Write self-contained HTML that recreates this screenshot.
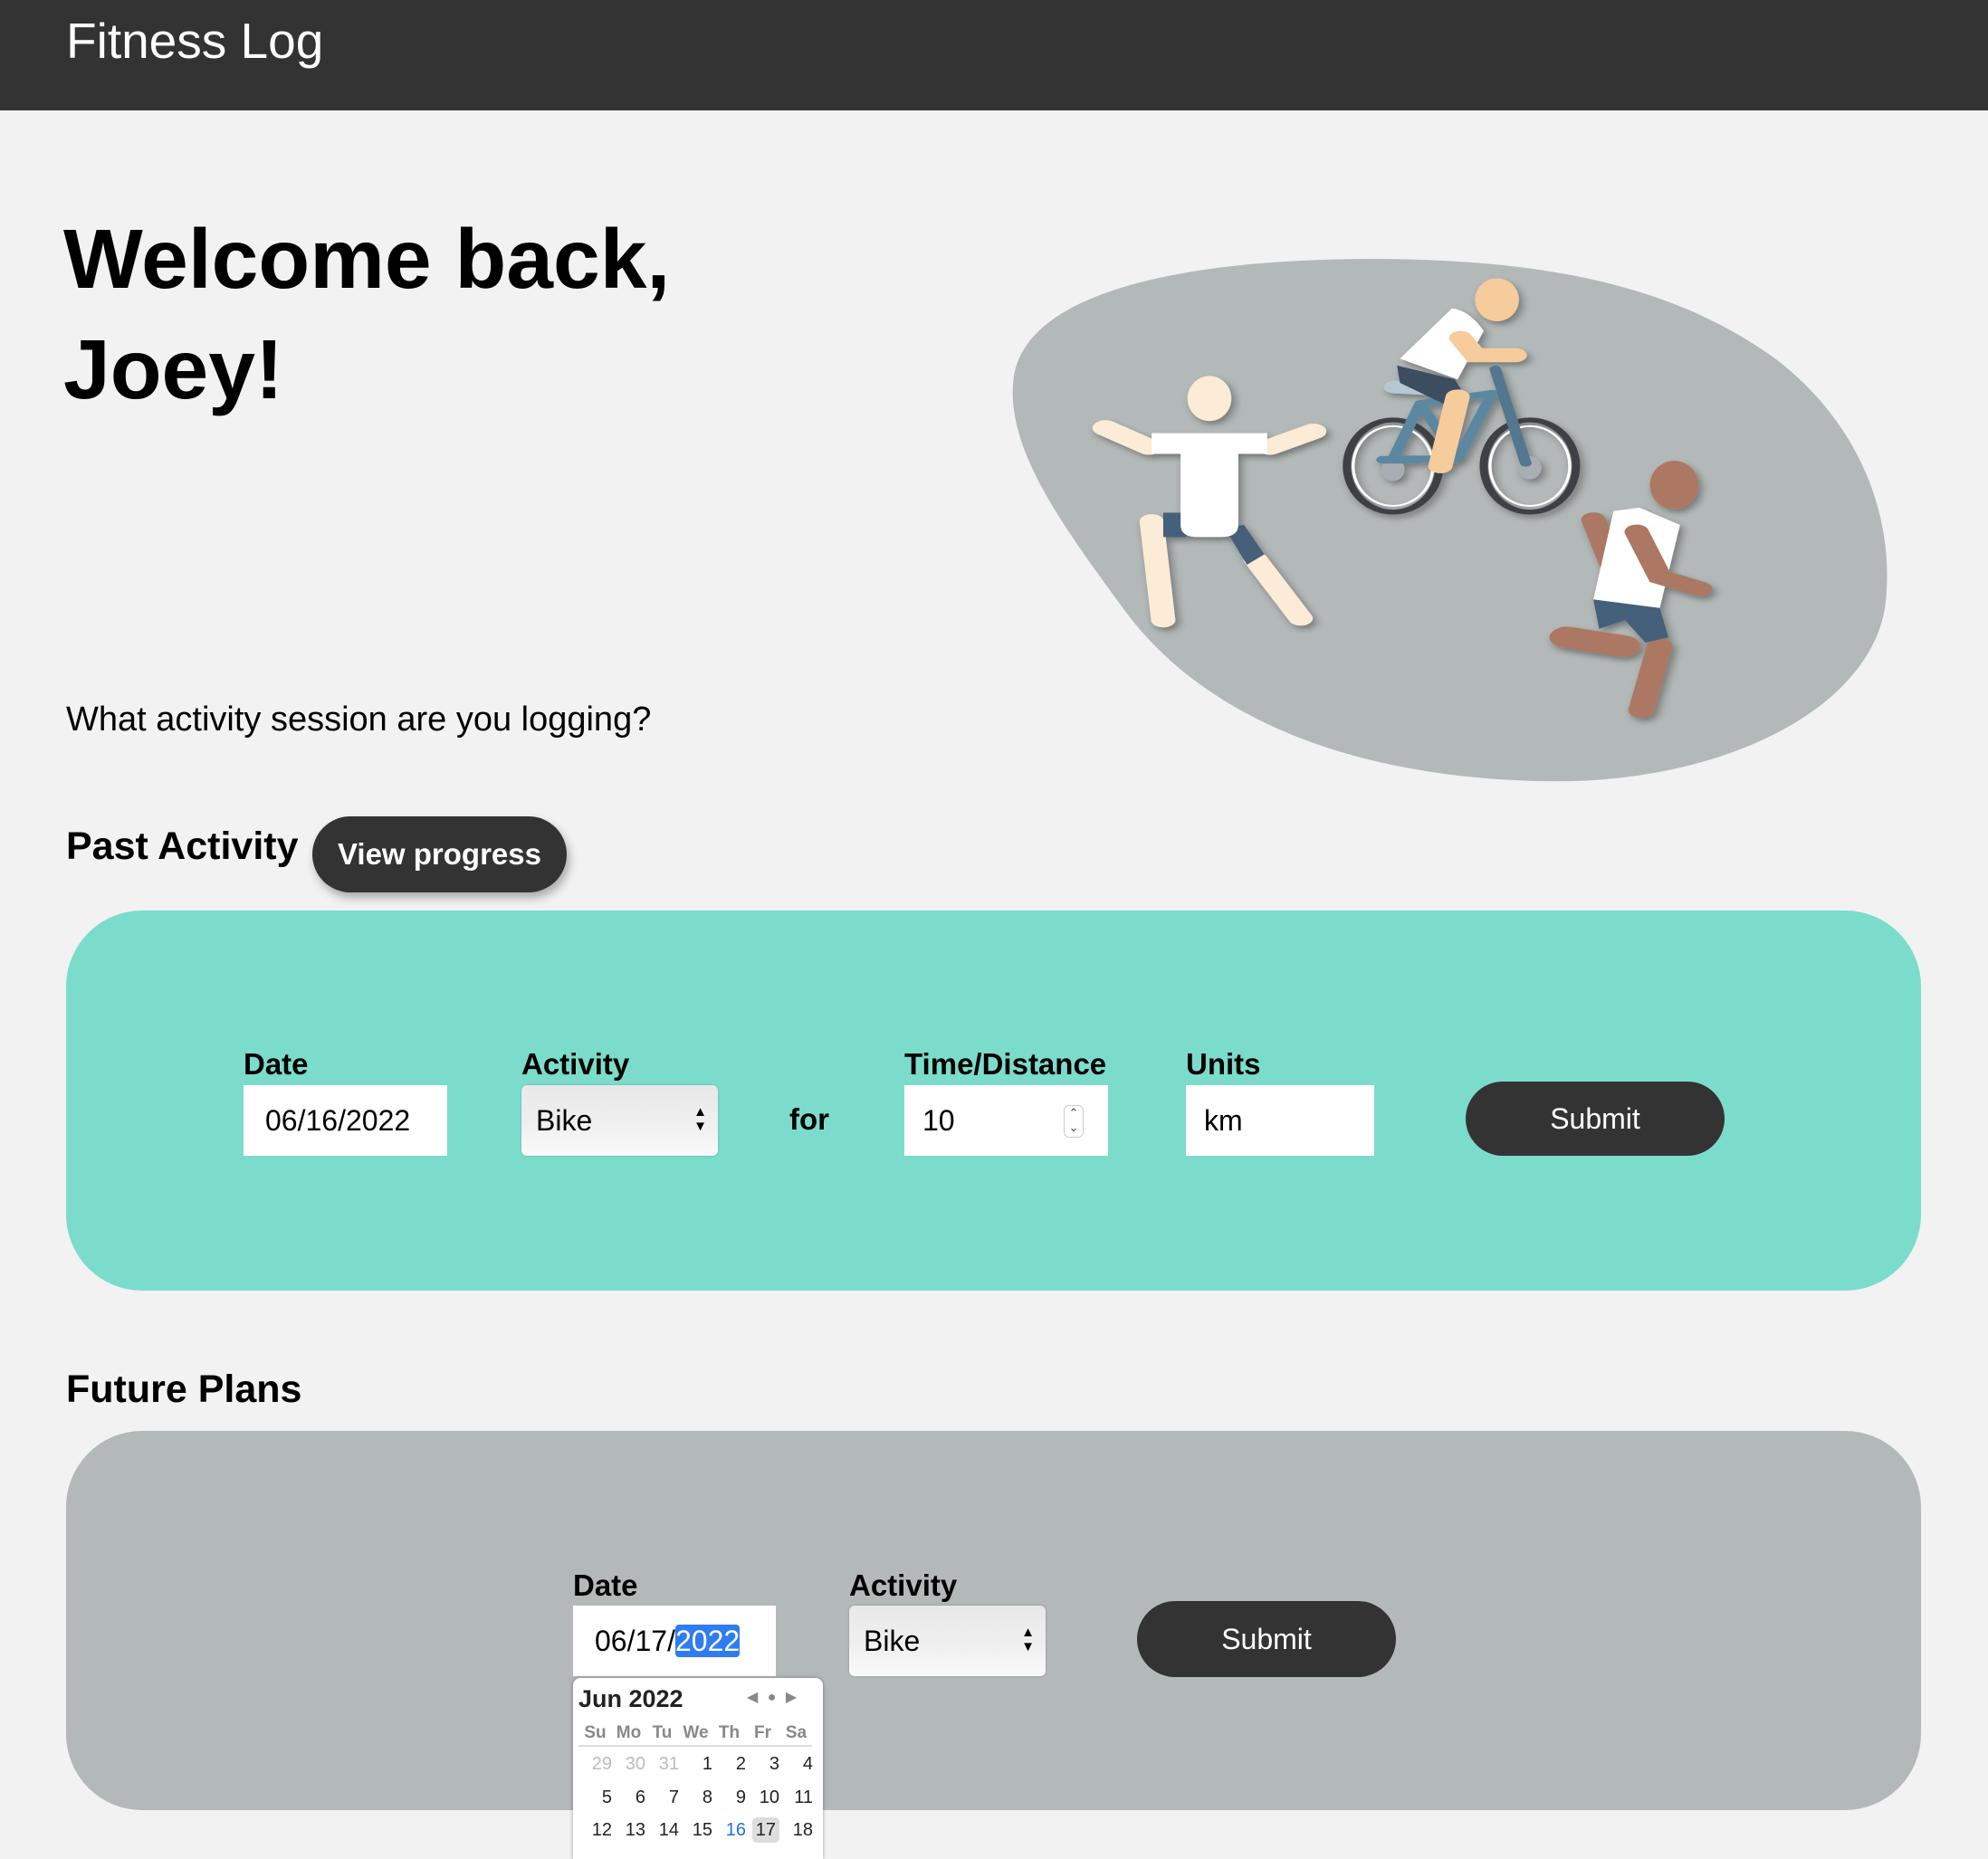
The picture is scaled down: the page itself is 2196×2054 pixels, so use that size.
<!DOCTYPE html>
<html><head><meta charset="utf-8">
<style>
*{margin:0;padding:0;box-sizing:border-box}
body{width:2196px;height:2046px;background:#f2f2f2;font-family:"Liberation Sans",sans-serif;position:relative;overflow:hidden;color:#000}
.a{position:absolute}
.hdr{left:0;top:0;width:2196px;height:122px;background:#333}
.lbl{font-weight:bold;font-size:33px;line-height:40px}
.inp{background:#fff;font-size:32px;line-height:78px;height:78px;padding-left:24px}
.sel{height:78px;border-radius:6px;background:linear-gradient(#e8e8e8,#f0f0f0 60%,#fafafa);box-shadow:0 0 2px rgba(0,0,0,.25);font-size:32px;line-height:78px;padding-left:16px}
.sel .ar{position:absolute;right:12px;top:22px;font-size:15px;line-height:16px;text-align:center}
.btn{background:#333;color:#fff;border-radius:42px;text-align:center}
</style></head><body>
<div class="a hdr"></div>
<div class="a" style="left:73px;top:15px;color:#fff;font-size:55px;line-height:60px">Fitness Log</div>
<div class="a" style="left:70px;top:225px;font-weight:bold;font-size:93px;line-height:122px">Welcome back,<br>Joey!</div>
<div class="a" style="left:73px;top:773px;font-size:38px;line-height:44px">What activity session are you logging?</div>

<svg class="a" style="left:1100px;top:270px" width="1000" height="600" viewBox="0 0 1568 1568" preserveAspectRatio="none">
<defs><filter id="sh" x="-20%" y="-20%" width="140%" height="140%"><feDropShadow dx="6" dy="10" stdDeviation="8" flood-color="#000" flood-opacity="0.35"/></filter></defs>
<path d="M640 42 C1000 40 1200 150 1350 330 C1500 520 1560 800 1540 1050 C1510 1350 1250 1560 950 1550 C600 1540 350 1350 220 1050 C120 820 20 600 30 400 C40 150 300 45 640 42Z" fill="#b3b9b8"/>
<g filter="url(#sh)" stroke-linecap="round">
<line x1="190" y1="530" x2="265" y2="585" stroke="#fcebd6" stroke-width="45"/>
<line x1="550" y1="540" x2="475" y2="585" stroke="#fcebd6" stroke-width="45"/>
<line x1="270" y1="800" x2="290" y2="1085" stroke="#fcebd6" stroke-width="42"/>
<line x1="450" y1="910" x2="528" y2="1080" stroke="#fcebd6" stroke-width="42"/>
<path d="M290 775 L330 775 L330 845 L290 845Z" fill="#44607a"/>
<path d="M395 815 L430 810 L465 895 L435 925Z" fill="#44607a"/>
<path d="M270 545 L470 545 L470 605 L420 605 L420 810 Q420 845 390 845 L350 845 Q320 845 320 810 L320 605 L270 605Z" fill="#fff"/>
<ellipse cx="370" cy="445" rx="38" ry="65" fill="#fcebd6"/>
<ellipse cx="688" cy="640" rx="80" ry="133" fill="none" stroke="#3c3f45" stroke-width="14"/>
<ellipse cx="688" cy="640" rx="69" ry="115" fill="none" stroke="#fff" stroke-width="5"/>
<ellipse cx="925" cy="640" rx="80" ry="133" fill="none" stroke="#3c3f45" stroke-width="14"/>
<ellipse cx="925" cy="640" rx="69" ry="115" fill="none" stroke="#fff" stroke-width="5"/>
<ellipse cx="688" cy="650" rx="20" ry="33" fill="#a9aeb5"/><ellipse cx="925" cy="645" rx="20" ry="33" fill="#a9aeb5"/>
<path d="M688 620 L735 460 L860 430 L800 620 Z M735 460 L800 620" fill="none" stroke="#5c87a0" stroke-width="20" stroke-linejoin="round"/>
<line x1="670" y1="622" x2="725" y2="622" stroke="#5c87a0" stroke-width="22"/>
<line x1="865" y1="360" x2="918" y2="632" stroke="#53778f" stroke-width="20"/>
<line x1="690" y1="412" x2="755" y2="418" stroke="#b3c8d0" stroke-width="36"/>
<path d="M700 330 L790 185 Q820 190 845 250 L800 390 Z" fill="#fff"/>
<path d="M695 350 L795 390 L810 430 L775 460 L700 400Z" fill="#3d4d60"/>
<line x1="800" y1="440" x2="770" y2="640" stroke="#f6cc9c" stroke-width="42"/>
<path d="M805 270 L830 320 L900 320" fill="none" stroke="#f6cc9c" stroke-width="40"/>
<ellipse cx="868" cy="160" rx="38" ry="62" fill="#f6cc9c"/>
<line x1="1035" y1="795" x2="1065" y2="920" stroke="#ac7864" stroke-width="42"/>
<line x1="990" y1="1135" x2="1085" y2="1160" stroke="#ac7864" stroke-width="62"/>
<line x1="1150" y1="1160" x2="1118" y2="1345" stroke="#ac7864" stroke-width="45"/>
<path d="M1035 1025 L1150 1050 L1165 1135 L1125 1150 L1090 1085 L1045 1110Z" fill="#44607a"/>
<path d="M1070 770 L1115 760 L1185 810 L1150 1050 L1035 1025Z" fill="#fff"/>
<path d="M1110 830 L1150 960 L1220 995" fill="none" stroke="#ac7864" stroke-width="42"/>
<ellipse cx="1175" cy="695" rx="42" ry="70" fill="#ac7864"/>
</g>
</svg>

<div class="a" style="left:73px;top:909px;font-weight:bold;font-size:43px;line-height:52px">Past Activity</div>
<div class="a btn" style="left:345px;top:902px;width:281px;height:84px;line-height:84px;font-weight:bold;font-size:33px;box-shadow:3px 6px 10px rgba(0,0,0,.3)">View progress</div>

<div class="a" style="left:73px;top:1006px;width:2049px;height:420px;background:#7cdccb;border-radius:84px"></div>
<div class="a lbl" style="left:269px;top:1156px">Date</div>
<div class="a inp" style="left:269px;top:1199px;width:225px">06/16/2022</div>
<div class="a lbl" style="left:576px;top:1156px">Activity</div>
<div class="a sel" style="left:576px;top:1199px;width:217px">Bike<div class="ar">▲<br>▼</div></div>
<div class="a lbl" style="left:872px;top:1217px">for</div>
<div class="a lbl" style="left:999px;top:1156px">Time/Distance</div>
<div class="a inp" style="left:999px;top:1199px;width:225px;padding-left:20px">10<div class="a" style="left:176px;top:22px;width:22px;height:36px;border:1px solid #ccc;border-radius:6px;font-size:13px;line-height:16px;text-align:center;color:#444">⌃<br>⌄</div></div>
<div class="a lbl" style="left:1310px;top:1156px">Units</div>
<div class="a inp" style="left:1310px;top:1199px;width:208px;padding-left:20px">km</div>
<div class="a btn" style="left:1619px;top:1195px;width:286px;height:82px;line-height:82px;font-size:32px">Submit</div>

<div class="a" style="left:73px;top:1509px;font-weight:bold;font-size:43px;line-height:52px">Future Plans</div>
<div class="a" style="left:73px;top:1581px;width:2049px;height:419px;background:#b3b9b8;border-radius:84px"></div>
<div class="a lbl" style="left:633px;top:1732px">Date</div>
<div class="a inp" style="left:633px;top:1774px;width:224px;height:78px">06/17/<span style="background:#2f7bf2;color:#fff;border-radius:4px">2022</span></div>
<div class="a lbl" style="left:938px;top:1732px">Activity</div>
<div class="a sel" style="left:938px;top:1774px;width:217px">Bike<div class="ar">▲<br>▼</div></div>
<div class="a btn" style="left:1256px;top:1769px;width:286px;height:84px;line-height:84px;font-size:32px">Submit</div>

<div class="a" style="left:633px;top:1854px;width:276px;height:200px;background:#fff;border-radius:8px 8px 0 0;box-shadow:0 0 4px rgba(0,0,0,.35)">
<div class="a" style="left:6px;top:8px;font-weight:bold;font-size:27px;line-height:30px;color:#222">Jun 2022</div>
<div class="a" style="left:192px;top:12px;font-size:16px;line-height:20px;color:#888;word-spacing:6px">◀ ● ▶</div>
<div class="a" style="left:6px;top:46px;width:258px;height:30px;border-bottom:2px solid #ddd"></div>
<table class="a" style="left:6px;top:46px;border-collapse:collapse;font-size:20px;color:#222">
<tr style="height:30px;color:#888;font-weight:bold;font-size:19px"><td style="width:37px;text-align:center">Su</td><td style="width:37px;text-align:center">Mo</td><td style="width:37px;text-align:center">Tu</td><td style="width:37px;text-align:center">We</td><td style="width:37px;text-align:center">Th</td><td style="width:37px;text-align:center">Fr</td><td style="width:37px;text-align:center">Sa</td></tr>
<tr style="height:38px;text-align:right"><td style="color:#bbb">29</td><td style="color:#bbb">30</td><td style="color:#bbb">31</td><td>1</td><td>2</td><td>3</td><td>4</td></tr>
<tr style="height:36px;text-align:right"><td>5</td><td>6</td><td>7</td><td>8</td><td>9</td><td>10</td><td>11</td></tr>
<tr style="height:36px;text-align:right"><td>12</td><td>13</td><td>14</td><td>15</td><td style="color:#2a6fe0">16</td><td><span style="background:#ddd;border-radius:5px;padding:3px 4px">17</span></td><td>18</td></tr>
</table>
</div>
</body></html>
